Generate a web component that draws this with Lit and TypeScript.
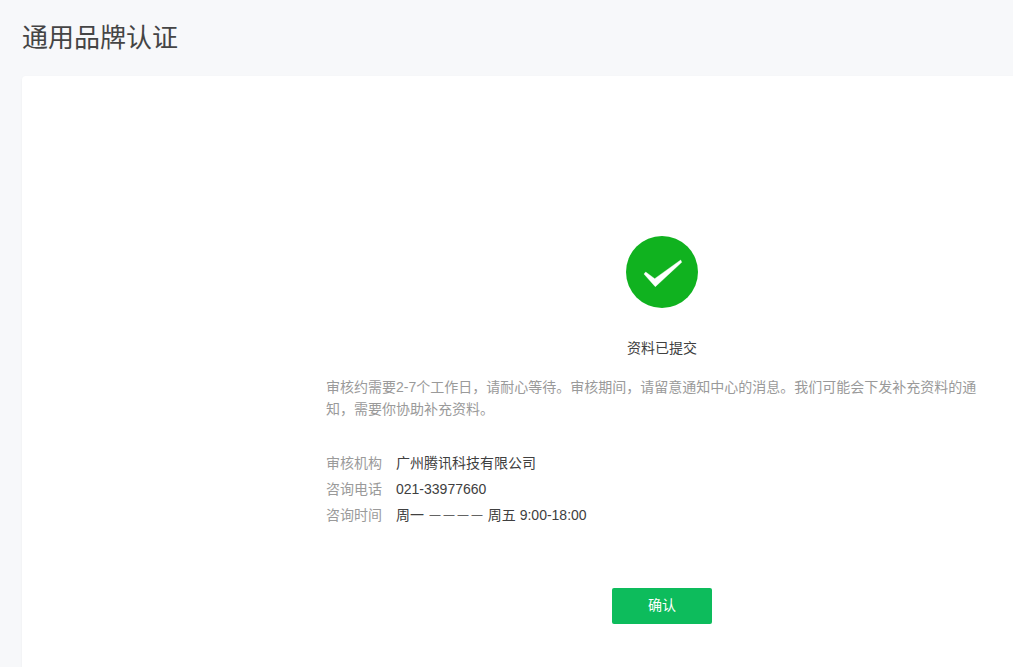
import { LitElement, html, css } from "lit";
import { customElement } from "lit/decorators.js";

@customElement("app-root")
export class AppRoot extends LitElement {
  static styles = css`
    :host {
      display: block;
      height: 667px;
      overflow: hidden;
      background: #f7f8fa;
      font-family: "Liberation Sans", "Noto Sans CJK SC", sans-serif;
      font-size: 14px;
      color: #404040;
    }
    .title {
      margin: 0;
      padding: 20px 0 0 22px;
      height: 56px;
      box-sizing: border-box;
      font-size: 26px;
      font-weight: 400;
      line-height: 36px;
      color: #454545;
    }
    .card {
      margin: 20px 0 0 22px;
      background: #fff;
      border-radius: 4px 0 0 0;
      box-shadow: 0 1px 2px rgba(150, 150, 150, 0.12);
      height: 640px;
      padding: 160px 15px 0 304px;
      box-sizing: border-box;
    }
    .content {
      width: 672px;
      display: flex;
      flex-direction: column;
    }
    .status {
      display: flex;
      flex-direction: column;
      align-items: center;
    }
    .icon {
      display: block;
      width: 72px;
      height: 72px;
    }
    .status-text {
      margin-top: 30px;
      line-height: 20px;
    }
    .desc {
      margin: 18px 0 0;
      line-height: 22px;
      color: #9a9a9a;
    }
    .info {
      margin-top: 30px;
      display: grid;
      grid-template-columns: 70px 1fr;
      grid-auto-rows: 26px;
      line-height: 26px;
    }
    .label {
      color: #9a9a9a;
    }
    .dash {
      font-size: 11px;
      letter-spacing: 3px;
      padding-left: 1.5px;
      margin-right: -1.5px;
      vertical-align: 2px;
      line-height: 1;
    }
    .actions {
      margin-top: 60px;
      display: flex;
      justify-content: center;
    }
    .btn {
      width: 100px;
      height: 36px;
      border: 0;
      border-radius: 2px;
      background: #0dbc5c;
      color: #fff;
      font: inherit;
      line-height: 20px;
      padding: 0 0 3px;
    }
  `;

  render() {
    return html`
      <h1 class="title">通用品牌认证</h1>
      <section class="card">
        <div class="content">
          <div class="status">
            <svg class="icon" viewBox="0 0 72 72" aria-hidden="true">
              <circle cx="36" cy="36" r="36" fill="#10b21f"></circle>
              <path
                d="M18 38 L19.7 36 L28.7 42.7 L54.7 24 L55.7 26.3 L29.3 50.7 Z"
                fill="#fff"
                stroke="#fff"
                stroke-width="0.4"
                stroke-linejoin="round"
              ></path>
            </svg>
            <div class="status-text">资料已提交</div>
          </div>
          <p class="desc">
            审核约需要2-7个工作日，请耐心等待。审核期间，请留意通知中心的消息。我们可能会下发补充资料的通知，需要你协助补充资料。
          </p>
          <div class="info">
            <span class="label">审核机构</span><span>广州腾讯科技有限公司</span>
            <span class="label">咨询电话</span><span>021-33977660</span>
            <span class="label">咨询时间</span><span>周一 <span class="dash">————</span> 周五 9:00-18:00</span>
          </div>
          <div class="actions"><button class="btn">确认</button></div>
        </div>
      </section>
    `;
  }
}
